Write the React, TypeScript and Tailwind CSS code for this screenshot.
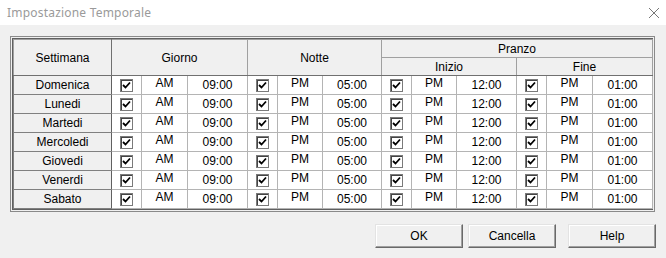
import React from 'react';

const days = ['Domenica', 'Lunedi', 'Martedi', 'Mercoledi', 'Giovedi', 'Venerdi', 'Sabato'];

const slots = [
  { ampm: 'AM', time: '09:00' },
  { ampm: 'PM', time: '05:00' },
  { ampm: 'PM', time: '12:00' },
  { ampm: 'PM', time: '01:00' },
];

const widths = [98, 30, 46, 60, 30, 45, 59, 30, 45, 60, 30, 46, 60];

const Check = () => (
  <span className="mx-auto flex h-[13px] w-[13px] items-center justify-center border border-[#7a7a7a] bg-white shadow-[inset_1px_1px_#444]">
    <svg width="9" height="9" viewBox="0 0 9 9">
      <path d="M1 4 L3.5 6.5 L8 1.5" fill="none" stroke="#000" strokeWidth="1.8" />
    </svg>
  </span>
);

const hd = 'border border-[#a0a0a0] bg-[#f0f0f0] p-0 text-center font-normal';
const td = 'h-[19px] border border-[#b4b4b4] bg-white p-0 text-center';

export default function App() {
  return (
    <div
      className="h-[258px] w-[666px] overflow-hidden bg-[#f0f0f0] text-[12px] text-black"
      style={{ fontFamily: '"Liberation Sans", Arial, sans-serif' }}
    >
      {/* title bar */}
      <div className="flex h-[25px] items-center justify-between bg-white pl-[7px] pr-[6px]">
        <span className="text-[12px] tracking-[0.2px] text-[#9a9a9a]" style={{ fontFamily: '"Noto Sans", "Liberation Sans", sans-serif' }}>
          Impostazione Temporale
        </span>
        <svg width="12" height="12" viewBox="0 0 12 12">
          <path d="M1 1 L11 11 M11 1 L1 11" stroke="#777" strokeWidth="1" />
        </svg>
      </div>

      {/* grid frame */}
      <div className="ml-[10px] mt-[11px] w-[645px] border border-[#8a8a8a] bg-[#f0f0f0] p-px">
        <div className="border border-[#606060]">
          <table className="w-[637px] table-fixed border-collapse leading-[14px]">
            <colgroup>
              {widths.map((w, i) => (
                <col key={i} style={{ width: w }} />
              ))}
            </colgroup>
            <thead>
              <tr>
                <th rowSpan={2} className={`${hd} border-b-[#707070] border-r-[#707070]`}>Settimana</th>
                <th rowSpan={2} colSpan={3} className={`${hd} border-b-[#707070]`}>Giorno</th>
                <th rowSpan={2} colSpan={3} className={`${hd} border-b-[#707070]`}>Notte</th>
                <th colSpan={6} className={`${hd} h-[18px]`}>Pranzo</th>
              </tr>
              <tr>
                <th colSpan={3} className={`${hd} h-[18px] border-b-[#707070]`}>Inizio</th>
                <th colSpan={3} className={`${hd} h-[18px] border-b-[#707070]`}>Fine</th>
              </tr>
            </thead>
            <tbody>
              {days.map((d) => (
                <tr key={d}>
                  <td className="h-[19px] border border-[#808080] border-r-[#606060] bg-[#f0f0f0] p-0 text-center">{d}</td>
                  {slots.map((s, i) => (
                    <React.Fragment key={i}>
                      <td className={td}>
                        <Check />
                      </td>
                      <td className={td}>
                        <span className="relative -top-[2px]">{s.ampm}</span>
                      </td>
                      <td className={td}>{s.time}</td>
                    </React.Fragment>
                  ))}
                </tr>
              ))}
            </tbody>
          </table>
        </div>
      </div>

      {/* buttons */}
      <div className="mt-[12px] flex pl-[375px]">
        {['OK', 'Cancella', 'Help'].map((b, i) => (
          <button
            key={b}
            className={`h-[24px] w-[88px] border border-t-[#e3e3e3] border-l-[#e3e3e3] border-r-[#696969] border-b-[#696969] bg-[#f0f0f0] text-[12px] shadow-[inset_-1px_-1px_#a0a0a0,inset_1px_1px_#fff] ${
              i === 1 ? 'ml-[5px]' : i === 2 ? 'ml-[12px]' : ''
            }`}
          >
            {b}
          </button>
        ))}
      </div>
    </div>
  );
}
